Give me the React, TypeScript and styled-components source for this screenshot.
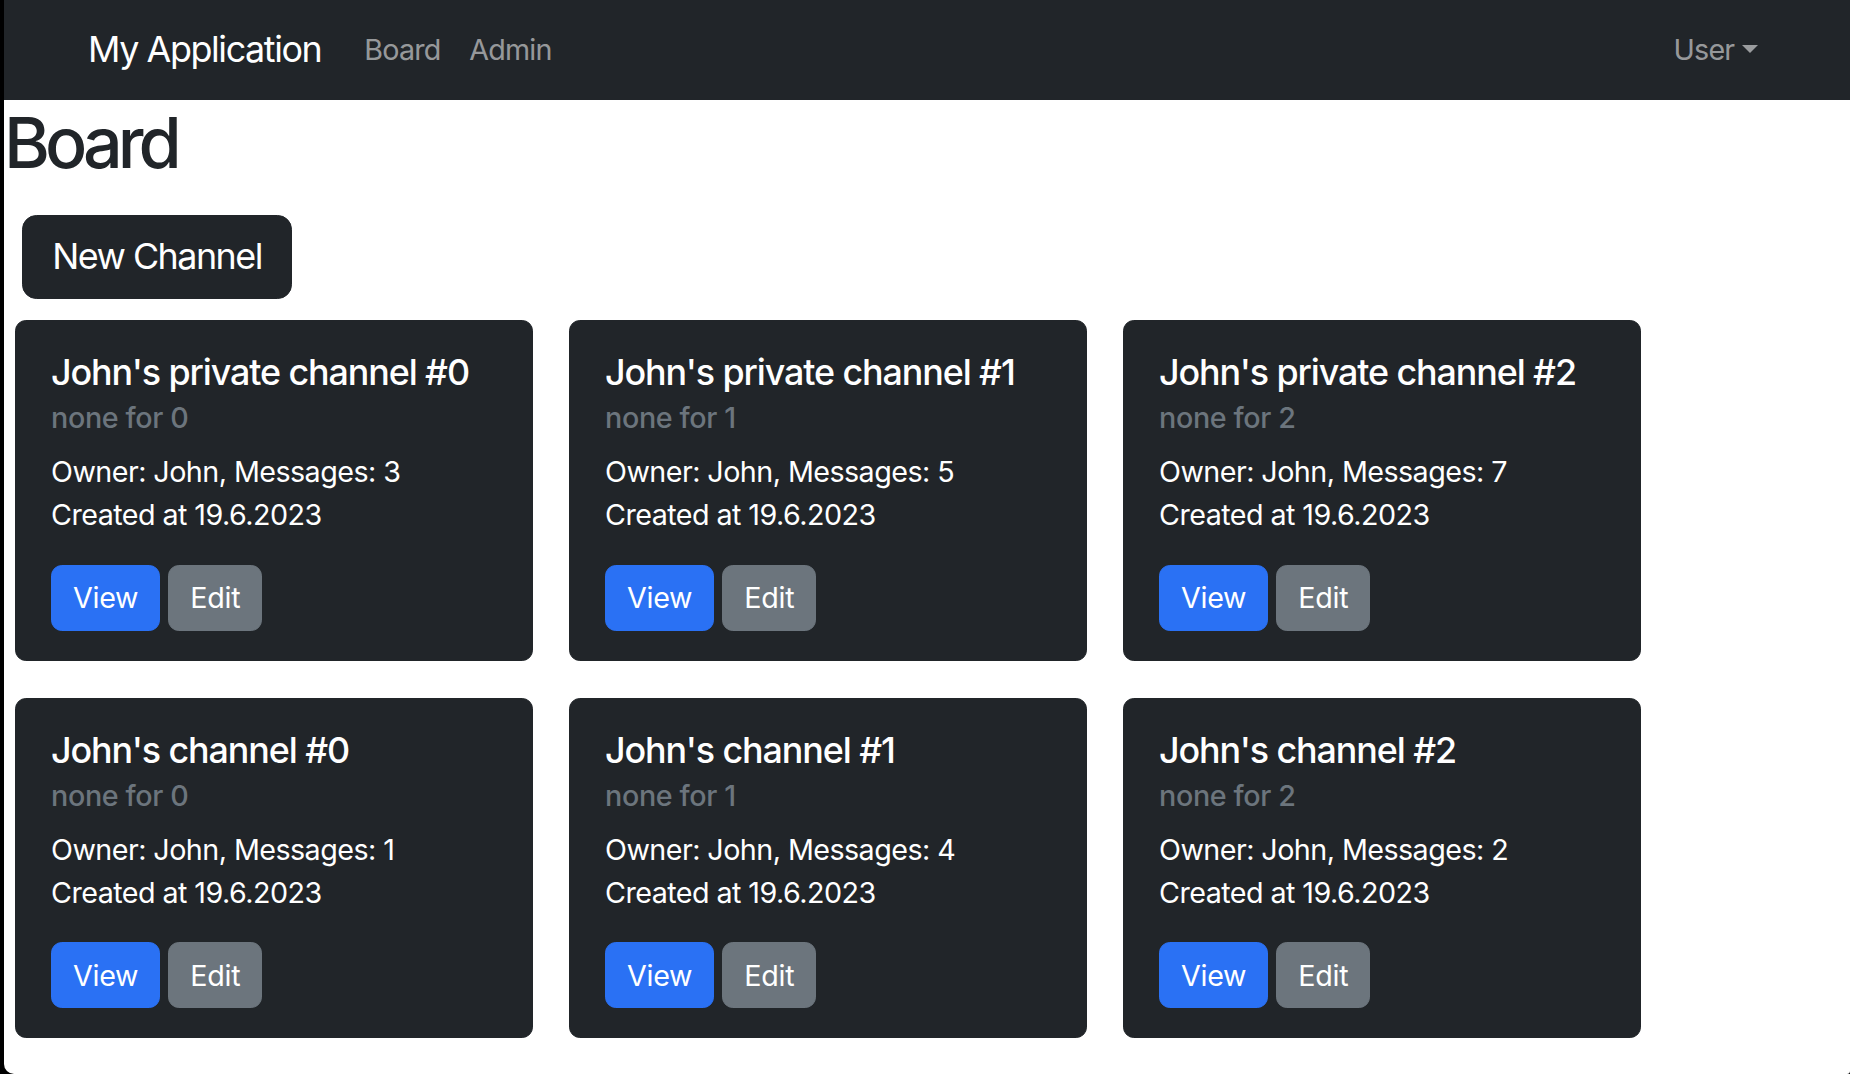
import React from "react";
import styled, { createGlobalStyle } from "styled-components";

const R = 28.7;

const GlobalStyle = createGlobalStyle`
  html, body {
    margin: 0;
    padding: 0;
    background: #000;
  }
  body {
    font-family: Inter, "Noto Sans", "Liberation Sans", sans-serif;
    -webkit-font-smoothing: antialiased;
  }
  * { box-sizing: border-box; }
`;

const Window = styled.div`
  margin-left: 4px;
  min-height: 100vh;
  background: #fff;
  border-bottom-left-radius: 10px;
  border-bottom-right-radius: 3px;
  overflow: hidden;
`;

const Navbar = styled.nav`
  display: flex;
  align-items: center;
  height: 100px;
  background: #212529;
  padding: 0 78px 0 84px;
`;

const Brand = styled.a`
  color: #fff;
  font-size: ${R * 1.25}px;
  letter-spacing: -1.4px;
  line-height: 1.5;
  margin-right: ${R}px;
  text-decoration: none;
`;

const NavList = styled.div`
  display: flex;
  align-items: center;
`;

const NavLink = styled.a`
  padding: 0 ${R / 2}px;
  color: rgba(255, 255, 255, 0.55);
  font-size: ${R}px;
  letter-spacing: -0.8px;
  line-height: 1.5;
  text-decoration: none;
`;

const UserToggle = styled(NavLink)`
  margin-left: auto;
  display: flex;
  align-items: center;
  &::after {
    content: "";
    display: inline-block;
    margin-left: 0.255em;
    border-top: 0.3em solid;
    border-right: 0.3em solid transparent;
    border-left: 0.3em solid transparent;
    transform: translateY(-1px);
  }
`;

const PageTitle = styled.h1`
  margin: 0 0 ${R / 2}px;
  font-size: 70px;
  font-weight: 500;
  letter-spacing: -5px;
  line-height: 86px;
  color: #212529;
`;

const Toolbar = styled.div`
  display: flex;
  padding: ${R / 2}px 18px 0;
`;

const DarkLargeButton = styled.button`
  font-family: inherit;
  font-size: ${R * 1.25}px;
  letter-spacing: -1.5px;
  line-height: 1.5;
  padding: ${R / 2}px ${R + 0.5}px;
  border: 1px solid #212529;
  border-radius: ${R / 2}px;
  background: #212529;
  color: #fff;
  cursor: pointer;
`;

const CardGrid = styled.div`
  display: grid;
  grid-template-columns: repeat(3, 518px);
  column-gap: 36px;
  row-gap: 37px;
  padding: 21px 0 0 11px;
`;

const Card = styled.div`
  background: #212529;
  border: 1px solid #212529;
  border-radius: ${R * 0.375}px;
  padding: 30px 35px 29px;
  color: #fff;
`;

const CardTitle = styled.h5`
  margin: 0 0 ${R / 2}px;
  font-size: ${R * 1.25}px;
  font-weight: 500;
  letter-spacing: -1.1px;
  line-height: 1.2;
  color: #fff;
`;

const CardSubtitle = styled.h6`
  margin: ${-R / 4}px 0 ${R / 2}px;
  font-size: ${R}px;
  font-weight: 500;
  letter-spacing: -0.35px;
  line-height: 1.2;
  color: #6c757d;
`;

const CardText = styled.p`
  margin: 0 0 ${R}px;
  font-size: ${R}px;
  letter-spacing: -0.55px;
  line-height: 1.5;
`;

const Actions = styled.div`
  display: flex;
  gap: 8px;
`;

const ActionButton = styled.button<{ $variant: "primary" | "secondary" }>`
  font-family: inherit;
  font-size: ${R}px;
  letter-spacing: -0.3px;
  line-height: 1.5;
  padding: ${R * 0.375 - 0.5}px ${R * 0.75 - 0.5}px;
  border-radius: ${R * 0.375}px;
  border: 1px solid ${(p) => (p.$variant === "primary" ? "#2a71f4" : "#6c757d")};
  background: ${(p) => (p.$variant === "primary" ? "#2a71f4" : "#6c757d")};
  color: #fff;
  cursor: pointer;
`;

type Channel = { title: string; sub: string; messages: number };

const channels: Channel[] = [
  { title: "John's private channel #0", sub: "none for 0", messages: 3 },
  { title: "John's private channel #1", sub: "none for 1", messages: 5 },
  { title: "John's private channel #2", sub: "none for 2", messages: 7 },
  { title: "John's channel #0", sub: "none for 0", messages: 1 },
  { title: "John's channel #1", sub: "none for 1", messages: 4 },
  { title: "John's channel #2", sub: "none for 2", messages: 2 },
];

export default function App() {
  return (
    <>
      <GlobalStyle />
      <Window>
        <Navbar>
          <Brand href="#">My Application</Brand>
          <NavList>
            <NavLink href="#">Board</NavLink>
            <NavLink href="#">Admin</NavLink>
          </NavList>
          <UserToggle href="#">User</UserToggle>
        </Navbar>
        <main>
          <PageTitle>Board</PageTitle>
          <Toolbar>
            <DarkLargeButton>New Channel</DarkLargeButton>
          </Toolbar>
          <CardGrid>
            {channels.map((c) => (
              <Card key={c.title}>
                <CardTitle>{c.title}</CardTitle>
                <CardSubtitle>{c.sub}</CardSubtitle>
                <CardText>
                  Owner: John, Messages: {c.messages}
                  <br />
                  Created at 19.6.2023
                </CardText>
                <Actions>
                  <ActionButton $variant="primary">View</ActionButton>
                  <ActionButton $variant="secondary">Edit</ActionButton>
                </Actions>
              </Card>
            ))}
          </CardGrid>
        </main>
      </Window>
    </>
  );
}
